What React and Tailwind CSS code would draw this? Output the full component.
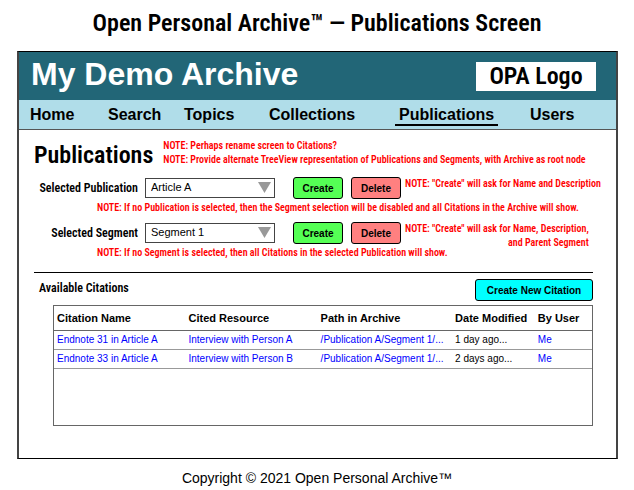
const NARROW = "font-['Roboto_Condensed','Liberation_Sans',sans-serif] font-semibold";

const navItems = ["Home", "Search", "Topics", "Collections", "Publications", "Users"];

const citations = [
  { name: "Endnote 31 in Article A", resource: "Interview with Person A", path: "/Publication A/Segment 1/...", modified: "1 day ago...", user: "Me" },
  { name: "Endnote 33 in Article A", resource: "Interview with Person B", path: "/Publication A/Segment 1/...", modified: "2 days ago...", user: "Me" },
];

function Note({ children, className = "" }) {
  return <p className={`${NARROW} text-[10px] leading-[14px] text-[#ff0000] ${className}`}>{children}</p>;
}

function Button({ color, children, className = "" }) {
  return (
    <button type="button" className={`h-[22px] rounded-[3px] border border-black text-[10px] font-bold ${color} ${className}`}>
      {children}
    </button>
  );
}

function Selector({ id, label, value, children }) {
  return (
    <div className="flex h-[22px] items-start">
      <label htmlFor={id} className={`${NARROW} w-[104px] shrink-0 text-right text-[12px] leading-[22px] whitespace-nowrap`}>
        {label}
      </label>
      <div className="relative mt-px ml-[7px] w-[130px] shrink-0">
        <select id={id} defaultValue={value} className="block h-5 w-full appearance-none border border-[#444] bg-white px-[5px] pb-px text-[11px]">
          <option>{value}</option>
        </select>
        <svg className="pointer-events-none absolute top-1 right-1" width="13" height="11" viewBox="0 0 13 11" aria-hidden="true">
          <path d="M0 0H13L6.500 11Z" fill="#999" />
        </svg>
      </div>
      <Button color="bg-[#55ff55]" className="ml-[18px] w-[50px] shrink-0">Create</Button>
      <Button color="bg-[#ff8080]" className="ml-2 w-[50px] shrink-0">Delete</Button>
      <div className="ml-1 whitespace-nowrap">{children}</div>
    </div>
  );
}

export default function App() {
  return (
    <div className="bg-white font-['Liberation_Sans',Arial,sans-serif] text-black">
      <h1 className={`${NARROW} pt-[9px] text-center text-[24px] leading-7`}>
        Open Personal Archive™ — Publications Screen
      </h1>

      <div className="mt-[14px] mr-4 ml-[17px] border-2 border-t border-b border-[#444] border-y-black">
        <header className="flex h-12 items-center justify-between bg-[#226677] pr-5 pl-3">
          <h2 className="pb-1 text-[32px] leading-9 font-bold text-white">My Demo Archive</h2>
          <div className={`${NARROW} flex h-[29px] w-[120px] items-center justify-center bg-white text-[24px]`}>
            OPA Logo
          </div>
        </header>

        <nav className="grid h-[30px] grid-cols-[78fr_76fr_85fr_130fr_131fr_86fr] items-center border-b border-[#555] bg-[#b0dde9] pl-[11px] text-[16px] font-bold">
          {navItems.map((item) => (
            <a key={item} href="#" className={`justify-self-start leading-[19px] ${item === "Publications" ? "-mx-1 border-b-2 border-black px-1 pt-[2px]" : ""}`}>
              {item}
            </a>
          ))}
        </nav>

        <main className="pt-2 pr-[23px] pb-8 pl-[15px]">
          <div className="flex items-start">
            <h3 className={`${NARROW} pt-[3px] text-[24px] leading-7`}>Publications</h3>
            <div className="ml-[10px] flex flex-col pt-px whitespace-nowrap">
              <Note>NOTE: Perhaps rename screen to Citations?</Note>
              <Note>NOTE: Provide alternate TreeView representation of Publications and Segments, with Archive as root node</Note>
            </div>
          </div>

          <div className="mt-2">
            <Selector id="publication" label="Selected Publication" value="Article A">
              <Note>NOTE: "Create" will ask for Name and Description</Note>
            </Selector>
            <Note className="mt-[2px] ml-[63px]">
              NOTE: If no Publication is selected, then the Segment selection will be disabled and all Citations in the Archive will show.
            </Note>
          </div>

          <div className="mt-[7px]">
            <Selector id="segment" label="Selected Segment" value="Segment 1">
              <Note className="text-right">
                NOTE: "Create" will ask for Name, Description,
                <br />
                and Parent Segment
              </Note>
            </Selector>
            <Note className="mt-[2px] ml-[63px]">
              NOTE: If no Segment is selected, then all Citations in the selected Publication will show.
            </Note>
          </div>

          <hr className="mt-3 border-t border-black" />

          <div className="mt-[6px] flex items-start justify-between pl-[5px]">
            <h4 className={`${NARROW} text-[12px] leading-[18px]`}>Available Citations</h4>
            <Button color="bg-[#00ffff]" className="w-[118px]">Create New Citation</Button>
          </div>

          <div className="mt-1 ml-[19px] min-h-[121px] border border-[#666]">
            <table className="w-full table-fixed border-collapse text-left text-[10px] whitespace-nowrap">
              <colgroup>
                <col className="w-[25%]" />
                <col className="w-[24%]" />
                <col className="w-[25%]" />
                <col className="w-[15%]" />
                <col className="w-[11%]" />
              </colgroup>
              <thead>
                <tr className="h-6 border-b border-[#666] text-[11px]">
                  <th className="pl-[3px]">Citation Name</th>
                  <th>Cited Resource</th>
                  <th className="pl-[3px]">Path in Archive</th>
                  <th className="pl-[3px]">Date Modified</th>
                  <th className="pl-[5px]">By User</th>
                </tr>
              </thead>
              <tbody>
                {citations.map((c) => (
                  <tr key={c.name} className="h-[19px] border-b border-[#999] text-[#0000ff]">
                    <td className="pl-[3px]"><a href="#">{c.name}</a></td>
                    <td><a href="#">{c.resource}</a></td>
                    <td className="pl-[3px]"><a href="#">{c.path}</a></td>
                    <td className="pl-[3px] text-black">{c.modified}</td>
                    <td className="pl-[5px]"><a href="#">{c.user}</a></td>
                  </tr>
                ))}
              </tbody>
            </table>
          </div>
        </main>
      </div>

      <footer className="pt-[10px] text-center text-[14px] leading-[18px]">Copyright © 2021 Open Personal Archive™</footer>
    </div>
  );
}
